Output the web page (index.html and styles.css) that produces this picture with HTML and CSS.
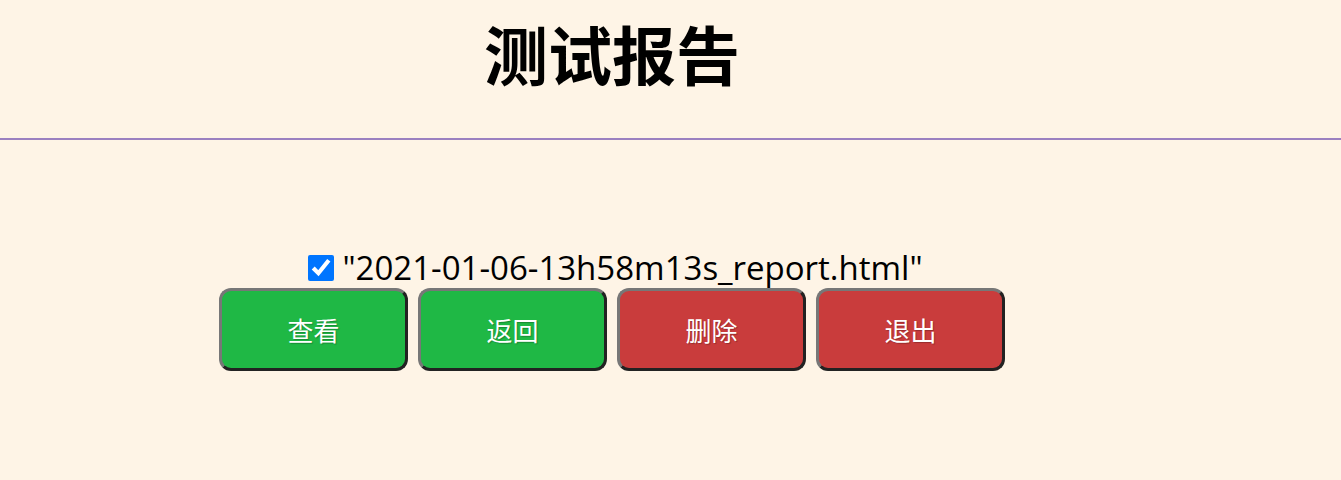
FILE: index.html
```html
<!DOCTYPE html>
<html lang="zh">
<head>
<meta charset="utf-8">
<title>测试报告</title>
<link rel="stylesheet" href="styles.css">
</head>
<body>
<div class="wrap">
  <h1 class="title">测试报告</h1>
</div>
<hr class="rule">
<div class="wrap main">
  <label class="file"><input type="checkbox" class="check" checked> "2021-01-06-13h58m13s_report.html"</label>
  <div class="actions">
    <button class="btn green">查看</button>
    <button class="btn green">返回</button>
    <button class="btn red">删除</button>
    <button class="btn red">退出</button>
  </div>
</div>
</body>
</html>
```
FILE: styles.css
```css
html, body {
  margin: 0;
  padding: 0;
  background: #fef4e6;
}
body {
  font-family: "Open Sans", "Noto Sans", "Noto Sans CJK SC", sans-serif;
  color: #000;
}
.wrap {
  width: 1224px;
  text-align: center;
}
.title {
  margin: 0;
  padding-top: 7px;
  height: 126px;
  box-sizing: border-box;
  font-family: "Noto Sans CJK SC", sans-serif;
  font-weight: 700;
  font-size: 64px;
  line-height: 90px;
}
.rule {
  margin: 0;
  border: 0;
  height: 2px;
  background: #9b80c0;
  margin-top: 12px;
}
.main {
  padding-top: 108px;
}
.file {
  display: inline-flex;
  align-items: center;
  gap: 8px;
  padding-left: 7px;
  font-size: 33px;
  line-height: 40px;
}
.check {
  width: 26px;
  height: 26px;
  margin: 0;
  accent-color: #0075ff;
}
.actions {
  display: flex;
  justify-content: center;
  gap: 10px;
}
.btn {
  width: 189px;
  height: 83px;
  border-width: 3px;
  border-style: solid;
  border-color: #777 #222 #222 #777;
  border-radius: 12px;
  color: #fff;
  font-family: "Noto Sans CJK SC", sans-serif;
  font-size: 26px;
  padding: 0;
  text-shadow: 1px 1px 1px rgba(0,0,0,0.25);
}
.green { background: #1fb845; }
.red { background: #c93c3c; }
```
